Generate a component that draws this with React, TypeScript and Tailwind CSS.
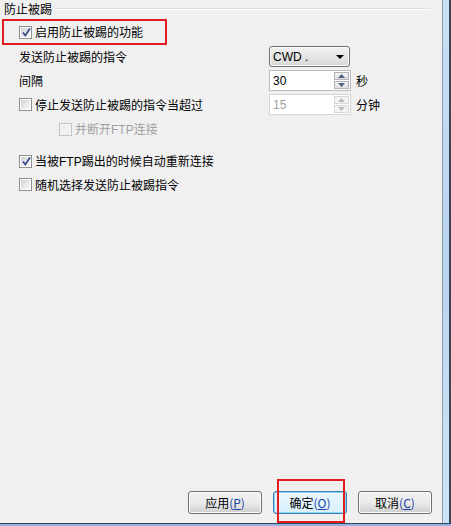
import type { ReactNode } from "react"

const FONT = "font-['Noto_Sans_CJK_SC','Microsoft_YaHei',sans-serif]"

function CheckBox({ checked = false, disabled = false }: { checked?: boolean; disabled?: boolean }) {
	return (
		<span
			className={`relative flex h-[13px] w-[13px] shrink-0 items-center justify-center border ${
				disabled ? "border-[#c4c4c4] bg-[#f4f4f4]" : "border-[#8e8f8f] bg-white"
			}`}
		>
			<span
				className={`h-[9px] w-[9px] ${
					disabled
						? "bg-[#f0f0f0]"
						: "bg-gradient-to-br from-[#cfd0d1] via-[#e6e7e8] to-[#f6f6f6]"
				}`}
			/>
			{checked && (
				<svg className="absolute left-[1px] top-[0px]" width="11" height="11" viewBox="0 0 11 11">
					<path d="M2 5.5 L4.3 8.5 L9 1.5" fill="none" stroke="#3c4f8a" strokeWidth="1.8" />
				</svg>
			)}
		</span>
	)
}

function Spinner({ value, disabled = false }: { value: string; disabled?: boolean }) {
	const arrow = disabled ? "#b8b8b8" : "#4d6185"
	return (
		<div
			className={`flex h-[21px] w-[82px] items-center border bg-white pl-[3px] pr-[1px] ${
				disabled ? "border-[#d6d6d6]" : "border-[#b9bcc2]"
			}`}
		>
			<span className={`flex-1 text-[12px] font-['Liberation_Sans',sans-serif] ${disabled ? "text-[#a0a0a0]" : "text-black"}`}>
				{value}
			</span>
			<div className="flex flex-col gap-[1px]">
				<span className={`flex h-[8px] w-[15px] items-center justify-center border ${disabled ? "border-[#d8d8d8] bg-[#f4f4f4]" : "border-[#b0b4ba] bg-gradient-to-b from-[#f6f6f6] to-[#dedede]"}`}>
					<svg width="7" height="4" viewBox="0 0 7 4"><path d="M0 4 L3.5 0 L7 4 Z" fill={arrow} /></svg>
				</span>
				<span className={`flex h-[8px] w-[15px] items-center justify-center border ${disabled ? "border-[#d8d8d8] bg-[#f4f4f4]" : "border-[#b0b4ba] bg-gradient-to-b from-[#f6f6f6] to-[#dedede]"}`}>
					<svg width="7" height="4" viewBox="0 0 7 4"><path d="M0 0 L3.5 4 L7 0 Z" fill={arrow} /></svg>
				</span>
			</div>
		</div>
	)
}

function Row({ children, control, h = 21, mt = 0 }: { children: ReactNode; control?: ReactNode; h?: number; mt?: number }) {
	return (
		<div className="flex items-center" style={{ height: h, marginTop: mt }}>
			<div className="flex w-[269px] items-center gap-[3px] pl-[19px]">{children}</div>
			{control}
		</div>
	)
}

function Button({ label, hot, focused = false }: { label: string; hot: string; focused?: boolean }) {
	return (
		<button
			className={`flex h-[23px] w-[74px] items-center justify-center rounded-[3px] border text-[12px] text-black ${
				focused
					? "border-[#3c7fb1] bg-gradient-to-b from-[#eaf6fd] to-[#d9f0fc] shadow-[inset_0_0_0_1px_#8ad3f6]"
					: "border-[#707070] bg-gradient-to-b from-[#f2f2f2] via-[#ebebeb] to-[#cfcfcf] shadow-[inset_0_0_0_1px_#fcfcfc]"
			}`}
		>
			{label}
			<span className="text-[#1a3fa8]">
				(<span className="underline">{hot}</span>)
			</span>
		</button>
	)
}

export default function App() {
	return (
		<div className={`flex h-[526px] w-[451px] flex-col bg-[#f0f0f0] ${FONT} text-[12px] leading-none text-black`}>
			<div className="flex flex-1">
				{/* Dialog body */}
				<div className="flex flex-1 flex-col border-r border-[#8c9aa6]">
					{/* Group header */}
					<div className="flex h-[17px] items-center pl-[4px]">
						<span>防止被踢</span>
						<span className="ml-[4px] mr-[12px] flex-1 border-t border-[#d5dfe5] border-b-white border-b" />
					</div>

					{/* Highlighted first option */}
					<div className="ml-[2px] mt-[2px] flex h-[26px] w-[165px] items-center gap-[3px] border-2 border-[#e31b23] pl-[15px]">
						<CheckBox checked />
						<span>启用防止被踢的功能</span>
					</div>

					<Row
						mt={1}
						control={
							<div className="flex h-[21px] w-[81px] items-center justify-between rounded-[3px] border border-[#707070] bg-gradient-to-b from-[#f2f2f2] to-[#d8d8d8] pl-[3px] pr-[5px] shadow-[inset_0_0_0_1px_#fbfbfb]">
								<span className="font-['Liberation_Sans',sans-serif] text-[12px]">CWD .</span>
								<svg width="8" height="4" viewBox="0 0 8 4"><path d="M0 0 L8 0 L4 4 Z" fill="#000" /></svg>
							</div>
						}
					>
						<span>发送防止被踢的指令</span>
					</Row>

					<Row
						mt={3}
						control={
							<div className="flex items-center gap-[5px]">
								<Spinner value="30" />
								<span>秒</span>
							</div>
						}
					>
						<span>间隔</span>
					</Row>

					<Row
						mt={3}
						control={
							<div className="flex items-center gap-[5px]">
								<Spinner value="15" disabled />
								<span>分钟</span>
							</div>
						}
					>
						<CheckBox />
						<span>停止发送防止被踢的指令当超过</span>
					</Row>

					<div className="mt-[6px] flex h-[17px] items-center gap-[3px] pl-[59px] text-[#a0a0a0]">
						<CheckBox disabled />
						<span>
							并断开<span className="font-['Liberation_Sans',sans-serif]">FTP</span>连接
						</span>
					</div>

					<div className="mt-[15px] flex h-[17px] items-center gap-[3px] pl-[19px]">
						<CheckBox checked />
						<span>
							当被<span className="font-['Liberation_Sans',sans-serif]">FTP</span>踢出的时候自动重新连接
						</span>
					</div>

					<div className="mt-[6px] flex h-[17px] items-center gap-[3px] pl-[19px]">
						<CheckBox />
						<span>随机选择发送防止被踢指令</span>
					</div>

					<div className="flex-1" />

					{/* Buttons */}
					<div className="mb-[9px] flex items-center gap-[11px] pl-[188px]">
						<Button label="应用" hot="P" />
						<div className="relative">
							<Button label="确定" hot="O" focused />
							<span className="pointer-events-none absolute -top-[12px] left-[4px] h-[44px] w-[68px] border-2 border-[#e31b23]" />
						</div>
						<Button label="取消" hot="C" />
					</div>
				</div>

				{/* Window frame, right */}
				<div className="flex w-[8px] border-r-2 border-[#3a4654] bg-gradient-to-b from-[#c9e0f6] via-[#b9d4ee] to-[#cfe3f7]" />
			</div>
			{/* Window frame, bottom */}
			<div className="h-[3px] border-t border-[#3a4654] bg-[#8db2e3]" />
		</div>
	)
}
